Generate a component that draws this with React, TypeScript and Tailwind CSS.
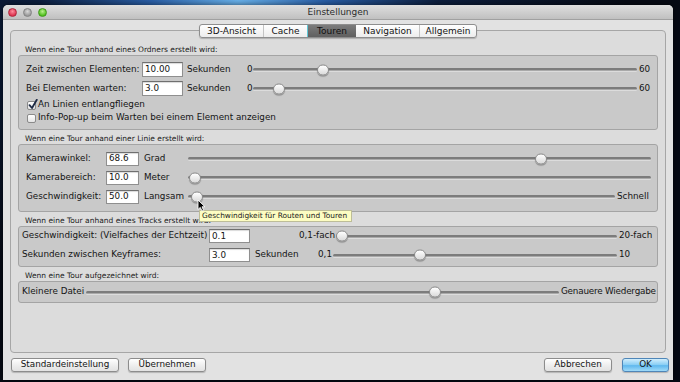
import React from "react";

function Slider({ pct, className }: { pct: number; className?: string }) {
  return (
    <div className={"relative h-full flex items-center " + (className ?? "")}>
      <div className="h-[3px] w-full rounded-full bg-[#7c7c7c] border-b border-[#a9a9a9] shadow-[0_1px_0_#dcdcdc]" />
      <div
        className="absolute top-1/2 h-[11px] w-[12px] -translate-x-1/2 -translate-y-1/2 rounded-full border border-[#8c8c8c] bg-[linear-gradient(#ffffff,#dadada)] shadow-[0_1px_1px_rgba(0,0,0,0.35)]"
        style={{ left: `${pct}%` }}
      />
    </div>
  );
}

function Field({ value, className }: { value: string; className: string }) {
  return (
    <div
      className={
        "flex items-center bg-white border border-[#8f8f8f] border-t-[#6f6f6f] pl-[2px] leading-none shadow-[inset_0_1px_1px_rgba(0,0,0,0.15)] " +
        className
      }
    >
      {value}
    </div>
  );
}

function Check({ checked }: { checked: boolean }) {
  return (
    <div className="relative w-[9px] h-[9px] rounded-[2px] border border-[#8a8a8a] bg-[linear-gradient(#ffffff,#e4e4e4)]">
      {checked && (
        <svg className="absolute left-[0px] top-[-3px]" width="10" height="11" viewBox="0 0 10 11">
          <path d="M1.5 6.2 L4 9 L8.8 0.8" fill="none" stroke="#1d2a44" strokeWidth="1.8" strokeLinecap="round" strokeLinejoin="round" />
        </svg>
      )}
    </div>
  );
}

function SectionLabel({ text, first }: { text: string; first?: boolean }) {
  return (
    <div
      className={
        "h-[11px] leading-[11px] pl-[7px] text-[7.5px] text-[#1a1a1a] whitespace-nowrap " + (first ? "" : "mt-[3px]")
      }
    >
      {text}
    </div>
  );
}

function Button({ label, className }: { label: string; className: string }) {
  return (
    <div
      className={
        "h-[14px] flex items-center justify-center rounded-[3px] border border-[#8c8c8c] bg-[linear-gradient(#ffffff,#ececec_60%,#e2e2e2)] shadow-[0_1px_1px_rgba(0,0,0,0.2)] text-[8.8px] " +
        className
      }
    >
      {label}
    </div>
  );
}

export default function App() {
  return (
    <div className="relative w-[680px] h-[382px] overflow-hidden pt-[5px] pl-[3px] bg-[radial-gradient(ellipse_at_35%_0%,#6ab4ee_0%,#2a5fa8_14%,#0c1e3e_32%,#060a14_62%)] font-['DejaVu_Sans',sans-serif] text-[8.8px] text-[#141414]">
      <div className="w-[670px] h-[375px] rounded-t-[5px] overflow-hidden flex flex-col bg-[#e2e2e2] shadow-[0_0_6px_rgba(0,0,0,0.6)]">
        {/* Title bar */}
        <div className="h-[15px] grid grid-cols-[1fr_auto_1fr] items-center bg-[linear-gradient(#dedede,#c0c0c0)] border-b border-[#a0a0a0]">
          <div className="flex items-center gap-[6px] pl-[5px]">
            <div className="w-[9px] h-[9px] rounded-full bg-[radial-gradient(circle_at_50%_35%,#ff8c9c,#dc3450_70%)] border border-[#b0283c]" />
            <div className="w-[9px] h-[9px] rounded-full bg-[radial-gradient(circle_at_50%_35%,#d8d8d8,#9a9a9a_70%)] border border-[#838383]" />
            <div className="w-[9px] h-[9px] rounded-full bg-[radial-gradient(circle_at_50%_35%,#b8f08c,#52c020_70%)] border border-[#3e9a18]" />
          </div>
          <div className="text-[9px] text-[#2c2c2c] leading-none">Einstellungen</div>
          <div />
        </div>

        {/* Body */}
        <div className="flex-1 flex flex-col px-[7px]">
          {/* Tabs */}
          <div className="relative z-10 mt-[4px] h-[14px] flex justify-center">
            <div className="flex h-[14px] rounded-[3px] border border-[#8e8e8e] bg-[linear-gradient(#ffffff,#ededed)] shadow-[0_1px_1px_rgba(0,0,0,0.2)] overflow-hidden text-[9px] leading-none">
              <div className="w-[64px] flex items-center justify-center border-r border-[#c4c4c4]">3D-Ansicht</div>
              <div className="w-[43px] flex items-center justify-center">Cache</div>
              <div className="w-[49px] flex items-center justify-center bg-[linear-gradient(#7c7c7c,#5f5f5f)] border-l border-[#5fc8d8] text-[#111]">Touren</div>
              <div className="w-[64px] flex items-center justify-center border-r border-[#c4c4c4]">Navigation</div>
              <div className="w-[56px] flex items-center justify-center">Allgemein</div>
            </div>
          </div>

          {/* Panel */}
          <div className="-mt-[8px] h-[323px] rounded-[4px] border border-[#a6a6a6] bg-[#dcdcdc] pt-[13px] px-[7px] flex flex-col">
            <SectionLabel first text="Wenn eine Tour anhand eines Ordners erstellt wird:" />
            <div className="h-[75px] rounded-[3px] border border-[#a4a4a4] bg-[#c9c9c9] pl-[7px] pt-[6px] flex flex-col">
              <div className="h-[15px] flex items-center">
                <div className="w-[116px] whitespace-nowrap">Zeit zwischen Elementen:</div>
                <Field value="10.00" className="w-[41px] h-[15px]" />
                <div className="ml-[4px] w-[60px]">Sekunden</div>
                <div className="w-[6px]">0</div>
                <Slider pct={18.1} className="flex-1" />
                <div className="w-[20px] pl-[2px]">60</div>
              </div>
              <div className="mt-[4px] h-[15px] flex items-center">
                <div className="w-[116px] whitespace-nowrap">Bei Elementen warten:</div>
                <Field value="3.0" className="w-[41px] h-[15px]" />
                <div className="ml-[4px] w-[60px]">Sekunden</div>
                <div className="w-[6px]">0</div>
                <Slider pct={6.7} className="flex-1" />
                <div className="w-[20px] pl-[2px]">60</div>
              </div>
              <div className="mt-[3px] h-[12px] flex items-center pl-[1px] gap-[2px]">
                <Check checked />
                <span>An Linien entlangfliegen</span>
              </div>
              <div className="mt-[1px] h-[12px] flex items-center pl-[1px] gap-[2px]">
                <Check checked={false} />
                <span>Info-Pop-up beim Warten bei einem Element anzeigen</span>
              </div>
            </div>

            <SectionLabel text="Wenn eine Tour anhand einer Linie erstellt wird:" />
            <div className="h-[68px] rounded-[3px] border border-[#a4a4a4] bg-[#c9c9c9] pl-[7px] pt-[6px] flex flex-col gap-[4px]">
              <div className="h-[15px] flex items-center pr-[6px]">
                <div className="w-[80px]">Kamerawinkel:</div>
                <Field value="68.6" className="w-[33px] h-[14px]" />
                <div className="ml-[5px] w-[44px]">Grad</div>
                <Slider pct={76.2} className="flex-1" />
              </div>
              <div className="h-[15px] flex items-center pr-[6px]">
                <div className="w-[80px]">Kamerabereich:</div>
                <Field value="10.0" className="w-[33px] h-[14px]" />
                <div className="ml-[5px] w-[44px]">Meter</div>
                <Slider pct={1.5} className="flex-1" />
              </div>
              <div className="h-[15px] flex items-center pr-[6px]">
                <div className="w-[80px]">Geschwindigkeit:</div>
                <Field value="50.0" className="w-[33px] h-[14px]" />
                <div className="ml-[5px] w-[44px]">Langsam</div>
                <Slider pct={2.1} className="flex-1" />
                <div className="w-[36px] pl-[2px]">Schnell</div>
              </div>
            </div>

            <SectionLabel text="Wenn eine Tour anhand eines Tracks erstellt wird:" />
            <div className="h-[41px] rounded-[3px] border border-[#a4a4a4] bg-[#c9c9c9] pl-[3px] pt-[2px] flex flex-col gap-[5px]">
              <div className="h-[14px] flex items-center">
                <div className="w-[187px] whitespace-nowrap">Geschwindigkeit: (Vielfaches der Echtzeit)</div>
                <Field value="0.1" className="w-[41px] h-[14px]" />
                <div className="w-[86px] text-right pr-[1px]">0,1-fach</div>
                <Slider pct={2.1} className="flex-1" />
                <div className="w-[40px] pl-[2px] whitespace-nowrap">20-fach</div>
              </div>
              <div className="h-[14px] flex items-center">
                <div className="w-[187px] whitespace-nowrap">Sekunden zwischen Keyframes:</div>
                <Field value="3.0" className="w-[41px] h-[14px]" />
                <div className="ml-[5px] w-[63px]">Sekunden</div>
                <div className="w-[15px]">0,1</div>
                <Slider pct={30.7} className="flex-1" />
                <div className="w-[40px] pl-[2px]">10</div>
              </div>
            </div>

            <SectionLabel text="Wenn eine Tour aufgezeichnet wird:" />
            <div className="h-[22px] rounded-[3px] border border-[#a4a4a4] bg-[#c9c9c9] pl-[3px] flex items-center">
              <div className="w-[62px] whitespace-nowrap">Kleinere Datei</div>
              <Slider pct={73.8} className="flex-1 ml-[2px]" />
              <div className="w-[98px] pl-[2px] whitespace-nowrap tracking-[-0.2px]">Genauere Wiedergabe</div>
            </div>
          </div>

          {/* Buttons */}
          <div className="mt-[5px] h-[14px] flex items-center pl-[1px]">
            <Button label="Standardeinstellung" className="w-[108px]" />
            <Button label="Übernehmen" className="w-[78px] ml-[9px]" />
            <div className="flex-1" />
            <Button label="Abbrechen" className="w-[68px]" />
            <div className="ml-[10px] mr-[-3px] w-[47px] h-[14px] flex items-center justify-center rounded-[3px] border border-[#4f86b8] bg-[linear-gradient(#d2eefc,#86cdf4_50%,#5fb8ee_55%,#9fdaf8)] shadow-[0_1px_1px_rgba(0,0,0,0.2)] text-[8.8px]">
              OK
            </div>
          </div>
        </div>
      </div>

      {/* Tooltip */}
      <div className="absolute left-[199px] top-[210px] w-[153px] h-[12px] bg-[#fdfdc2] border border-[#bdbd98] text-[7.4px] leading-[10px] pl-[2px] whitespace-nowrap text-[#1a1a1a]">
        Geschwindigkeit für Routen und Touren
      </div>

      {/* Cursor */}
      <svg className="absolute left-[197px] top-[199px]" width="9" height="13" viewBox="0 0 9 13">
        <path d="M1 1 L1 10.5 L3.3 8.4 L5 12 L6.6 11.3 L5 7.8 L8 7.8 Z" fill="#000" stroke="#fff" strokeWidth="0.9" strokeLinejoin="round" />
      </svg>
    </div>
  );
}
